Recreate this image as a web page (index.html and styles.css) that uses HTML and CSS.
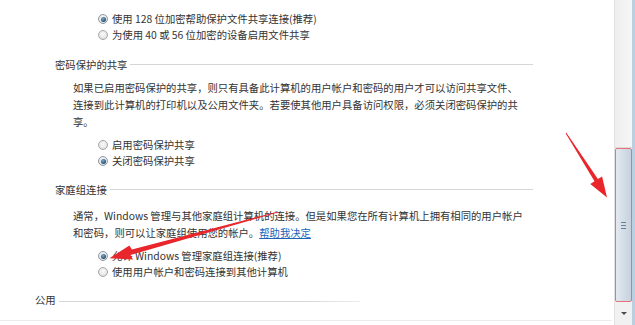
FILE: index.html
```html
<!DOCTYPE html>
<html lang="zh-CN">
<head>
<meta charset="utf-8">
<link rel="stylesheet" href="styles.css">
</head>
<body>
<div class="window">
  <div class="content">
    <div class="radios radios-top">
      <div class="radio-row"><span class="radio checked"></span><span>使用 128 位加密帮助保护文件共享连接(推荐)</span></div>
      <div class="radio-row"><span class="radio"></span><span>为使用 40 或 56 位加密的设备启用文件共享</span></div>
    </div>

    <div class="heading heading-pw"><span>密码保护的共享</span></div>
    <p class="desc">如果已启用密码保护的共享，则只有具备此计算机的用户帐户和密码的用户才可以访问共享文件、<br>连接到此计算机的打印机以及公用文件夹。若要使其他用户具备访问权限，必须关闭密码保护的共<br>享。</p>
    <div class="radios radios-pw">
      <div class="radio-row"><span class="radio"></span><span>启用密码保护共享</span></div>
      <div class="radio-row"><span class="radio checked"></span><span>关闭密码保护共享</span></div>
    </div>

    <div class="heading heading-home"><span>家庭组连接</span></div>
    <p class="desc desc-home">通常，Windows 管理与其他家庭组计算机的连接。但是如果您在所有计算机上拥有相同的用户帐户<br>和密码，则可以让家庭组使用您的帐户。<a class="link" href="#">帮助我决定</a></p>
    <div class="radios radios-home">
      <div class="radio-row"><span class="radio checked"></span><span>允许 Windows 管理家庭组连接(推荐)</span></div>
      <div class="radio-row"><span class="radio"></span><span>使用用户帐户和密码连接到其他计算机</span></div>
    </div>

    <div class="heading heading-public"><span>公用</span></div>
  </div>

  <div class="scrollbar">
    <div class="track"></div>
    <div class="thumb"><span class="grip"></span></div>
    <div class="arrow-down"><span class="tri"></span></div>
  </div>

  <svg class="annotations" width="635" height="325" viewBox="0 0 635 325">
    <polygon fill="#e8262b" points="565.6,133.3 566.4,132.7 597.9,179.1 602.1,176.4 607,197.5 590.3,184 594.5,181.3"/>
    <polygon fill="#e8262b" points="278.1,211.5 277.9,212.5 130.5,254.9 133,259.4 109.5,258.2 129.4,245.4 131.9,249.6"/>
  </svg>
</div>
</body>
</html>
```

FILE: styles.css
```css
* { box-sizing: border-box; }
html, body {
  margin: 0;
  padding: 0;
  background: #ffffff;
}
body {
  font-family: "Noto Sans CJK SC", "Noto Sans", sans-serif;
  font-size: 10.35px;
  color: #333333;
  width: 635px;
  height: 325px;
  overflow: hidden;
}
.window {
  position: relative;
  display: flex;
  width: 635px;
  height: 325px;
}
.content {
  flex: 1;
  display: flex;
  flex-direction: column;
  padding-top: 11px;
  border-bottom: 1px solid #ececec;
  height: 321px;
}
.radios {
  display: flex;
  flex-direction: column;
  margin-left: 98px;
}
.radio-row {
  display: flex;
  align-items: center;
  gap: 4px;
  height: 16px;
  line-height: 16px;
  white-space: nowrap;
}
.radio {
  width: 10px;
  height: 10px;
  border-radius: 50%;
  border: 1px solid #a7a7a7;
  background: radial-gradient(circle at 50% 40%, #fbfbfb 0%, #e6e6e6 60%, #d2d2d2 100%);
  display: flex;
  align-items: center;
  justify-content: center;
  flex: none;
}
.radio.checked {
  border-color: #8e9aa6;
}
.radio.checked::after {
  content: "";
  width: 5px;
  height: 5px;
  border-radius: 50%;
  background: radial-gradient(circle at 40% 35%, #7fa6c6 0%, #2f5d82 60%, #1d3f5c 100%);
}
.heading {
  display: flex;
  align-items: center;
  gap: 3px;
  height: 16px;
  line-height: 16px;
  margin-left: 55px;
  width: 478px;
  white-space: nowrap;
}
.heading::after {
  content: "";
  flex: 1;
  height: 1px;
  background: #d6d6d6;
  margin-top: -1px;
}
.heading-pw { margin-top: 14px; }
.heading-home { margin-top: 13px; }
.heading-public {
  margin-top: 12px;
  margin-left: 35px;
  width: 325px;
}
.heading-public::after {
  background: linear-gradient(to right, #d6d6d6 80%, #ececec 100%);
  margin-top: 3px;
}
.desc {
  margin: 6px 0 0 73px;
  line-height: 17px;
  white-space: nowrap;
}
.desc-home { margin-top: 9px; }
.link {
  color: #1c63b7;
  text-decoration: underline;
}
.radios-pw { margin-top: 7px; }
.radios-home { margin-top: 7px; }

.scrollbar {
  width: 21px;
  flex: none;
  display: flex;
  flex-direction: column;
  background: #f1f1f1;
  border-left: 1px solid #e2e2e2;
  border-right: 3px solid #b9cfe4;
  margin-left: 2px;
}
.track {
  height: 148px;
  border-bottom: 1px solid #dcdcdc;
  background: linear-gradient(to right, #eeeeee, #f6f6f6);
}
.thumb {
  height: 154px;
  border: 1px solid #e5737a;
  border-radius: 2px;
  background: linear-gradient(to right, #e4e9ef 0%, #d3dde7 50%, #c7d2de 100%);
  display: flex;
  align-items: center;
  justify-content: center;
}
.grip {
  width: 5px;
  height: 7px;
  border-top: 1px solid #6f7f8f;
  border-bottom: 1px solid #6f7f8f;
  position: relative;
}
.grip::after {
  content: "";
  display: block;
  margin-top: 2px;
  height: 1px;
  background: #6f7f8f;
}
.arrow-down {
  flex: 1;
  display: flex;
  align-items: center;
  justify-content: center;
  background: #f1f1f1;
}
.tri {
  width: 0;
  height: 0;
  border-left: 3px solid transparent;
  border-right: 3px solid transparent;
  border-top: 3px solid #4a4a4a;
}
.annotations {
  position: absolute;
  left: 0;
  top: 0;
  pointer-events: none;
}
```
